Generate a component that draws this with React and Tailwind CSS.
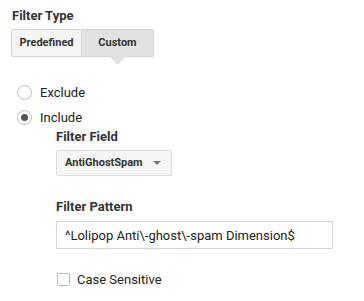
import React, { useState } from 'react';

const font = { fontFamily: "Roboto, 'Liberation Sans', sans-serif" };

export default function App() {
  const [type, setType] = useState('custom');
  const [mode, setMode] = useState('include');
  const [caseSensitive, setCaseSensitive] = useState(false);

  return (
    <div className="w-[364px] h-[301px] bg-white text-[#222] flex flex-col pl-[12px] pt-[8px]" style={font}>
      {/* Filter Type */}
      <div className="text-[13px] font-bold leading-[16px] text-[#333]">Filter Type</div>
      <div className="mt-[5px] -ml-[1px] flex">
        <button
          onClick={() => setType('predefined')}
          className={`w-[71px] h-[28px] border border-[#d4d4d4] rounded-l-[2px] text-[11px] font-bold text-[#333] ${type === 'predefined' ? 'bg-[#e2e2e2]' : 'bg-[#f5f5f5]'}`}
        >
          Predefined
        </button>
        <div className="relative">
          <button
            onClick={() => setType('custom')}
            className={`w-[72px] h-[28px] border border-l-0 border-[#d4d4d4] rounded-r-[2px] text-[11px] font-bold text-[#333] ${type === 'custom' ? 'bg-[#e2e2e2]' : 'bg-[#f5f5f5]'}`}
          >
            Custom
          </button>
          {type === 'custom' && (
            <svg className="absolute left-[28px] top-[27px]" width="15" height="9" viewBox="0 0 15 9">
              <path d="M0 0.5 L7.5 8 L15 0.5" fill="#e2e2e2" stroke="#d4d4d4" />
              <rect x="0" y="0" width="15" height="1" fill="#e2e2e2" />
            </svg>
          )}
        </div>
      </div>

      {/* Radios */}
      <div className="mt-[25px] flex flex-col gap-[5px] pl-[5px]">
        {['exclude', 'include'].map((m) => (
          <label key={m} className="flex items-center h-[20px] cursor-pointer" onClick={() => setMode(m)}>
            <span className="w-[15px] h-[15px] rounded-full border border-[#bdbdbd] flex items-center justify-center">
              {mode === m && <span className="w-[7px] h-[7px] rounded-full bg-[#555]" />}
            </span>
            <span className="ml-[8px] text-[13px] text-[#222]">{m === 'exclude' ? 'Exclude' : 'Include'}</span>
          </label>
        ))}
      </div>

      {/* Filter Field */}
      <div className="pl-[44px] flex flex-col">
        <div className="mt-[2px] text-[13px] font-bold leading-[16px] text-[#333]">Filter Field</div>
        <button className="mt-[5px] w-[116px] h-[26px] bg-[#f5f5f5] border border-[#dcdcdc] rounded-[2px] flex items-center justify-between pl-[8px] pr-[10px]">
          <span className="text-[11px] font-bold text-[#333]">AntiGhostSpam</span>
          <svg width="8" height="4" viewBox="0 0 8 4">
            <path d="M0 0 L8 0 L4 4 Z" fill="#777" />
          </svg>
        </button>

        {/* Filter Pattern */}
        <div className="mt-[23px] text-[13px] font-bold leading-[16px] text-[#333]">Filter Pattern</div>
        <input
          type="text"
          defaultValue="^Lolipop Anti\-ghost\-spam Dimension$"
          className="mt-[6px] w-[277px] h-[28px] border border-[#d6d6d6] px-[8px] text-[13px] text-[#222] outline-none"
          style={font}
        />

        {/* Case Sensitive */}
        <label className="mt-[22px] flex items-center h-[16px] cursor-pointer" onClick={() => setCaseSensitive(!caseSensitive)}>
          <span className="ml-[1px] w-[13px] h-[13px] border border-[#bdbdbd] rounded-[1px] flex items-center justify-center text-[10px] leading-none text-[#555]">
            {caseSensitive ? '✓' : ''}
          </span>
          <span className="ml-[7px] text-[13px] text-[#222]">Case Sensitive</span>
        </label>
      </div>
    </div>
  );
}
